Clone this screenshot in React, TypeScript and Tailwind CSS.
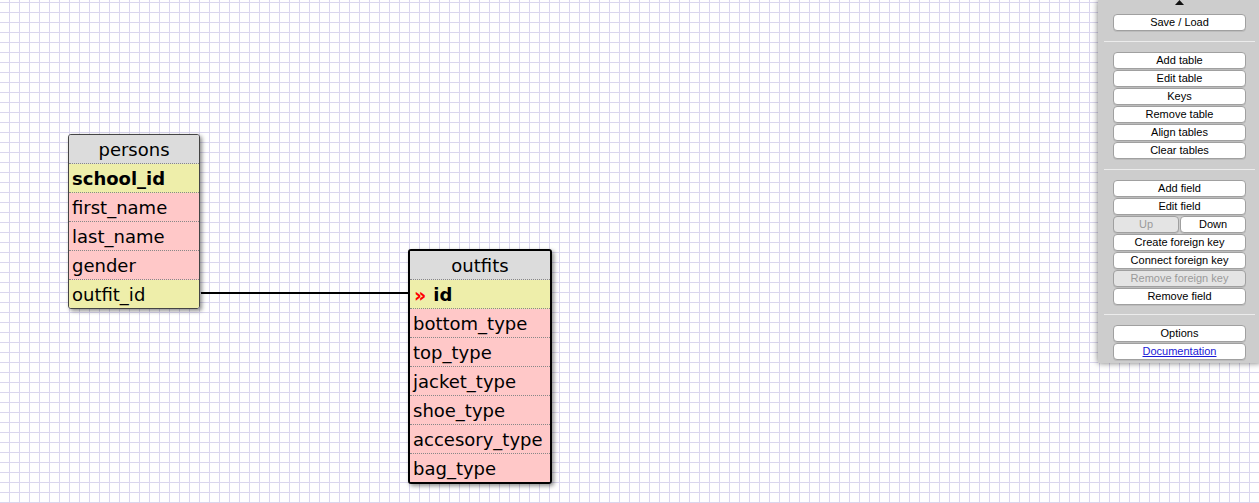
const PERSONS = [
  { name: "school_id", key: true },
  { name: "first_name" },
  { name: "last_name" },
  { name: "gender" },
  { name: "outfit_id", fk: true },
];

const OUTFITS = [
  { name: "id", key: true, arrow: true },
  { name: "bottom_type" },
  { name: "top_type" },
  { name: "jacket_type" },
  { name: "shoe_type" },
  { name: "accesory_type" },
  { name: "bag_type" },
];

type Field = { name: string; key?: boolean; fk?: boolean; arrow?: boolean };

function Table({
  title,
  fields,
  className,
}: {
  title: string;
  fields: Field[];
  className: string;
}) {
  return (
    <div
      className={`absolute overflow-hidden rounded-[3px] shadow-[2px_2px_4px_rgba(0,0,0,0.45)] font-['DejaVu_Sans',sans-serif] text-[18px] text-black ${className}`}
    >
      <div className="flex h-[29px] items-center justify-center border-b border-dotted border-[#888] bg-[#dcdcdc] pt-[2px] leading-none">
        {title}
      </div>
      {fields.map((f, i) => (
        <div
          key={f.name}
          className={`flex items-center px-[3px] pt-[2px] leading-none ${
            i < fields.length - 1 ? "h-[29px] border-b border-dotted border-[#888]" : "h-[28px]"
          } ${f.key || f.fk ? "bg-[#eeeeaa]" : "bg-[#ffc8c8]"} ${f.key ? "font-bold" : ""}`}
        >
          {f.arrow && <span className="ml-px mr-[7px] text-[19px] font-bold text-[#ff0000]">»</span>}
          {f.name}
        </div>
      ))}
    </div>
  );
}

function Btn({
  children,
  disabled,
  link,
  className = "",
}: {
  children: string;
  disabled?: boolean;
  link?: boolean;
  className?: string;
}) {
  return (
    <div
      className={`flex h-[17px] items-center justify-center rounded-[4px] border border-[#a0a0a0] leading-none shadow-[0_1px_0_rgba(0,0,0,0.08)] ${
        disabled ? "bg-[#e4e4e4] text-[#9a9a9a]" : "bg-white text-black"
      } ${className}`}
    >
      <span className={link ? "text-[#1a1ad6] underline" : ""}>{children}</span>
    </div>
  );
}

function Sep({ className }: { className: string }) {
  return <div className={`mx-[6px] h-px bg-[#ececec] ${className}`} />;
}

export default function App() {
  return (
    <div className="relative h-[503px] w-[1259px] overflow-hidden bg-white bg-[linear-gradient(to_right,#dad6ee_1px,transparent_1px),linear-gradient(to_bottom,#dad6ee_1px,transparent_1px)] bg-[size:10px_10px] bg-[position:9px_2px]">
      {/* relation line */}
      <div className="absolute left-[201px] top-[292px] h-[2px] w-[208px] bg-black" />

      <Table title="persons" fields={PERSONS} className="left-[68px] top-[134px] w-[132px] border border-[#444]" />
      <Table title="outfits" fields={OUTFITS} className="left-[408px] top-[249px] w-[144px] border-2 border-black" />

      {/* toolbar */}
      <div className="absolute left-[1098px] top-0 w-[163px] bg-[#cdcdcd] pb-[3px] pt-[14px] font-['Liberation_Sans',Arial,sans-serif] text-[11px] shadow-[0_0_6px_rgba(0,0,0,0.55)]">
        <svg className="absolute left-[77px] top-0" width="9" height="5" viewBox="0 0 9 5">
          <path d="M4.5 0 L9 5 L0 5 Z" fill="#111" />
        </svg>
        <div className="ml-[15px] mr-[15px] flex flex-col gap-px">
          <Btn>Save / Load</Btn>
        </div>
        <Sep className="my-[10px]" />
        <div className="ml-[15px] mr-[15px] flex flex-col gap-px">
          <Btn>Add table</Btn>
          <Btn>Edit table</Btn>
          <Btn>Keys</Btn>
          <Btn>Remove table</Btn>
          <Btn>Align tables</Btn>
          <Btn>Clear tables</Btn>
        </div>
        <Sep className="mb-[10px] mt-[10px]" />
        <div className="ml-[15px] mr-[15px] flex flex-col gap-px">
          <Btn>Add field</Btn>
          <Btn>Edit field</Btn>
          <div className="flex gap-px">
            <Btn disabled className="flex-1">Up</Btn>
            <Btn className="flex-1">Down</Btn>
          </div>
          <Btn>Create foreign key</Btn>
          <Btn>Connect foreign key</Btn>
          <Btn disabled>Remove foreign key</Btn>
          <Btn>Remove field</Btn>
        </div>
        <Sep className="mb-[10px] mt-[9px]" />
        <div className="ml-[15px] mr-[15px] flex flex-col gap-px">
          <Btn>Options</Btn>
          <Btn link>Documentation</Btn>
        </div>
      </div>
    </div>
  );
}
